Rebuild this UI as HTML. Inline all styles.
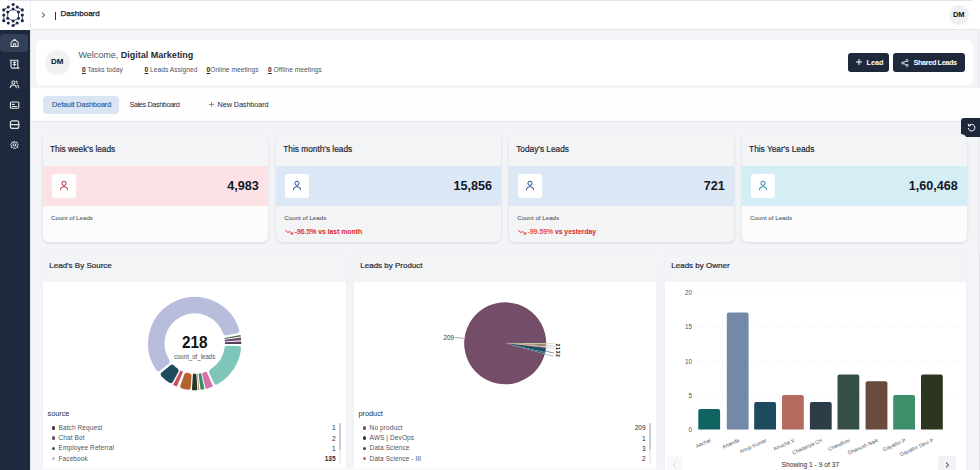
<!DOCTYPE html>
<html><head><meta charset="utf-8">
<style>
*{box-sizing:border-box;margin:0;padding:0}
html,body{width:980px;height:470px;overflow:hidden;font-family:"Liberation Sans",sans-serif;background:#eff1f5;color:#1f2937}
.abs{position:absolute;white-space:nowrap}
#side{position:absolute;left:0;top:30px;width:30px;height:440px;background:#1e293d}
#logo{position:absolute;left:0;top:0;width:30px;height:30px;background:#fff}
#hdr{position:absolute;left:30px;top:0;width:950px;height:30px;background:#fff;border-bottom:1px solid #e3e6eb;border-left:1px solid #eceef1}
#topline{position:absolute;left:8px;top:0;width:964px;height:1px;background:#dfe2e6}
.act{position:absolute;left:0;top:4px;width:28px;height:18px;background:#334058;border-radius:4px}
#mainbg{position:absolute;left:30px;top:30px;width:950px;height:440px;background:#f2f4f7;border-left:1px solid #e6e8ec}
#welcome{position:absolute;left:36px;top:39.5px;width:937px;height:45.8px;background:#fff;border-radius:5px;box-shadow:0 0 1px rgba(0,0,0,.06)}
#tabs{position:absolute;left:31px;top:88px;width:949px;height:34px;background:#fefefe;border-bottom:1px solid #e2e5ea}
.card{position:absolute;top:134px;width:224.7px;height:108.2px;background:#f3f4f6;border-radius:6px;box-shadow:0 1px 3px rgba(0,0,0,.12);overflow:hidden}
.card .t{position:absolute;left:7px;top:10px;font-size:8.3px;color:#1f2937;-webkit-text-stroke:0.2px #1f2937}
.card .band{position:absolute;left:0;top:31.6px;width:100%;height:40.9px}
.card .ib{position:absolute;left:8.7px;top:8.3px;width:24px;height:24px;background:#fff;border-radius:3px}
.card .ib svg{position:absolute;left:0;top:0}
.card .num{position:absolute;right:9px;top:13.2px;font-size:12.6px;font-weight:bold;color:#111827}
.card .c{position:absolute;left:8px;top:80px;font-size:6.2px;color:#374151}
.card .tr{position:absolute;left:8.5px;top:93.5px;font-size:6.8px;color:#dc2626;font-weight:bold}
.card .tr svg{position:absolute;left:0;top:1px}
.card .tr span{position:absolute;left:10px;top:0;white-space:nowrap}
.panel{position:absolute;top:253px;height:217px;background:#f3f4f6;border-radius:6px 6px 0 0;box-shadow:0 0 2px rgba(0,0,0,.06);overflow:hidden}
.panel .t{position:absolute;left:6.3px;top:8.2px;font-size:8px;color:#1f2937;-webkit-text-stroke:0.2px #1f2937}
.panel .body{position:absolute;left:0;top:29px;width:100%;bottom:0;background:#fff}
.btn{position:absolute;top:53px;height:19px;background:#1e293b;border-radius:3px;color:#fff;font-size:7.3px;font-weight:bold}
.leg{position:absolute;font-size:6.5px;color:#4b5563;letter-spacing:0.1px}
.leg i{position:absolute;left:-6.7px;top:2.3px;width:3.4px;height:3.4px;border-radius:50%}
.val{position:absolute;font-size:6.5px;color:#1f2937;text-align:right;width:30px;margin-left:0.6px;margin-top:0.4px}
</style></head><body>
<div id="mainbg"></div>
<div id="logo">
<svg width="30" height="30" viewBox="0 0 30 30" style="position:absolute;left:0;top:0">
<g stroke="#1e2a4a" stroke-width="0.8" fill="none">
<polygon points="13.1,8.9 18.5,12.1 18.5,18.2 13.1,21 7.7,18.2 7.7,12.1"/>
<line x1="3.8" y1="9.9" x2="8.3" y2="7"/><line x1="17.2" y1="7" x2="22.3" y2="9.9"/>
<line x1="3.8" y1="15" x2="3.8" y2="20.7"/><line x1="22.3" y1="15" x2="22.3" y2="20.7"/>
<line x1="13.1" y1="25.5" x2="17.2" y2="23"/>
</g>
<g fill="#1e2a4a">
<circle cx="13.1" cy="4.5" r="1.5"/><circle cx="8.3" cy="7" r="1.5"/><circle cx="17.2" cy="7" r="1.5"/>
<circle cx="3.8" cy="9.9" r="1.6"/><circle cx="22.3" cy="9.9" r="1.6"/><circle cx="13.1" cy="8.9" r="1.5"/>
<circle cx="7.7" cy="12.1" r="1.5"/><circle cx="18.5" cy="12.1" r="1.5"/><circle cx="3.8" cy="15" r="1.6"/>
<circle cx="22.3" cy="15" r="1.6"/><circle cx="3.8" cy="20.7" r="1.6"/><circle cx="22.3" cy="20.7" r="1.6"/>
<circle cx="7.7" cy="18.2" r="1.5"/><circle cx="18.5" cy="18.2" r="1.5"/><circle cx="13.1" cy="21" r="1.5"/>
<circle cx="8.3" cy="23" r="1.5"/><circle cx="17.2" cy="23" r="1.5"/><circle cx="13.1" cy="25.5" r="1.6"/>
</g></svg>
</div>
<div id="hdr">
  <svg class="abs" style="left:9.8px;top:12px" width="5" height="6" viewBox="0 0 5 6"><path d="M1 0.7 L3.8 3 L1 5.3" stroke="#333a45" stroke-width="1" fill="none"/></svg>
  <div class="abs" style="left:24.3px;top:12px;width:1px;height:7.5px;background:#333"></div>
  <div class="abs" style="left:29.6px;top:9.2px;font-size:8px;color:#111827;-webkit-text-stroke:0.25px #111827">Dashboard</div>
  <div class="abs" style="left:918px;top:5.2px;width:19.5px;height:19.5px;border-radius:50%;background:#f0f0f0;font-size:7.5px;font-weight:bold;text-align:center;line-height:19.5px;color:#111">DM</div>
</div>
<div id="topline"></div><div class="abs" style="left:978px;top:30px;width:1px;height:224px;background:#e6e8eb"></div>
<div id="side">
  <div class="act"></div>
  <svg width="30" height="130" viewBox="0 0 30 130" style="position:absolute;left:0;top:0" stroke="#e3e6eb" stroke-width="1.15" fill="none" stroke-linejoin="round" stroke-linecap="round">
    <!-- home center 14.6,13 -->
    <g transform="translate(14.6 13) scale(0.88) translate(-14.6 -13)"><path d="M10.6 12.3 L14.6 8.8 L18.6 12.3 L18.6 17 L10.6 17 Z"/>
    <path d="M13.3 17 L13.3 14 L15.9 14 L15.9 17"/></g>
    <!-- scroll center 14.6,34 -->
    <path d="M11 30.2 L17.8 30.2 L17.8 36.5 Q17.8 38.1 19 38.1 L12.2 38.1 Q11 38.1 11 36.6 L11 31.5 Q11 30.2 10.2 30.2"/>
    <path d="M13.2 32.5 L15.8 32.5 M13.2 34.5 L15.8 34.5 M14.5 31.5 L14.5 36"/>
    <!-- users center 14.4,54.4 -->
    <g transform="translate(14.4 54.4) scale(0.88) translate(-14.4 -54.4)"><circle cx="13.2" cy="52.3" r="1.8"/>
    <path d="M9.8 58.2 Q10 55.2 13.2 55.2 Q16.4 55.2 16.6 58.2"/>
    <path d="M16.3 50.6 Q18 51.2 17.4 53.4 M17.8 55.4 Q19.2 56 19.3 58.2"/></g>
    <!-- card center 14.5,75 -->
    <rect x="10.4" y="72" width="8.4" height="6.2" rx="1"/>
    <path d="M12.3 76.5 L16.8 76.5 M12.3 74.3 L14.2 74.3"/>
    <!-- db center 14.5,94.5 -->
    <rect x="10.4" y="90.8" width="8.4" height="7.6" rx="2"/>
    <path d="M10.3 94.6 L18.9 94.6"/>
    <!-- gear center 14.5,115 -->
    <g transform="translate(14.5 115) scale(0.86) translate(-14.5 -115)"><circle cx="14.5" cy="115" r="1.5"/>
    <path d="M14.5 110.8 L15.6 112 L17.3 111.6 L17.6 113.3 L18.9 114.4 L18 115.9 L18.3 117.6 L16.6 117.9 L15.6 119.2 L14.5 118.5 L13.4 119.2 L12.4 117.9 L10.7 117.6 L11 115.9 L10.1 114.4 L11.4 113.3 L11.7 111.6 L13.4 112 Z"/></g>
  </svg>
</div>
<div id="welcome">
  <div class="abs" style="left:9px;top:10.5px;width:24.5px;height:24.5px;border-radius:50%;background:#f1f1f1;font-size:8px;font-weight:bold;text-align:center;line-height:24.5px;color:#111">DM</div>
  <div class="abs" style="left:42.5px;top:10px;font-size:9px;color:#4b5563">Welcome, <b style="color:#1f2937">Digital Marketing</b></div>
  <div class="abs" style="left:46px;top:26.5px;font-size:6.6px;color:#4b5563;letter-spacing:0.05px"><b style="color:#222;text-decoration:underline">0</b> Tasks today</div>
  <div class="abs" style="left:108.5px;top:26.5px;font-size:6.6px;color:#4b5563;letter-spacing:0.05px"><b style="color:#222;text-decoration:underline">0</b> Leads Assigned</div>
  <div class="abs" style="left:170.5px;top:26.5px;font-size:6.6px;color:#4b5563;letter-spacing:0.05px"><b style="color:#222;text-decoration:underline">0</b>Online meetings</div>
  <div class="abs" style="left:232px;top:26.5px;font-size:6.6px;color:#4b5563;letter-spacing:0.05px"><b style="color:#222;text-decoration:underline">0</b> Offline meetings</div>
</div>
<div class="btn" style="left:848px;width:41px">
  <svg class="abs" style="left:7.5px;top:6px" width="6" height="6" viewBox="0 0 6 6"><path d="M3 0 V6 M0 3 H6" stroke="#fff" stroke-width="1"/></svg>
  <span class="abs" style="left:18.5px;top:4.8px">Lead</span></div>
<div class="btn" style="left:893px;width:72px">
  <svg class="abs" style="left:8px;top:5.5px" width="8" height="8" viewBox="0 0 8 8" fill="none" stroke="#fff" stroke-width="0.8"><circle cx="1.8" cy="4" r="1.1"/><circle cx="6" cy="1.6" r="1.1"/><circle cx="6" cy="6.4" r="1.1"/><path d="M2.8 3.5 L5 2.1 M2.8 4.5 L5 5.9"/></svg>
  <span class="abs" style="left:20.5px;top:4.8px;letter-spacing:-0.38px">Shared Leads</span></div>
<div id="tabs">
  <div class="abs" style="left:12px;top:7.5px;width:76px;height:18.5px;background:#dae5f4;border-radius:4px"></div>
  <div class="abs" style="left:21px;top:12px;font-size:7.3px;color:#34548e;letter-spacing:-0.1px;-webkit-text-stroke:0.12px #34548e">Default Dashboard</div>
  <div class="abs" style="left:98.5px;top:12px;font-size:7.3px;color:#1f2937;letter-spacing:-0.4px">Sales Dashboard</div>
  <svg class="abs" style="left:178px;top:13.5px" width="5" height="5" viewBox="0 0 5 5"><path d="M2.5 0 V5 M0 2.5 H5" stroke="#666" stroke-width="0.7"/></svg>
  <div class="abs" style="left:186.5px;top:12px;font-size:7.3px;color:#1f2937;letter-spacing:-0.1px">New Dashboard</div>
</div>
<div class="abs" style="left:961px;top:118px;width:19px;height:19px;background:#1d2739;border-radius:3px 0 0 3px">
  <svg class="abs" style="left:5.6px;top:4.6px" width="9" height="9" viewBox="0 0 9 9" fill="none" stroke="#fff" stroke-width="1"><path d="M2 2.6 A3.3 3.3 0 1 1 1.3 5"/><path d="M1.2 0.8 L1.6 3 L3.8 2.6" /></svg>
</div>

<div class="card" style="left:43px;background:linear-gradient(#f3f4f6 0,#f3f4f6 72px,#fcfcfd 72px)"><div class="t">This week's leads</div><div class="band" style="background:#fde2e5"><div class="ib"><svg width="24" height="24" viewBox="0 0 24 24" fill="none" stroke="#c2283e" stroke-width="1"><circle cx="12" cy="9.3" r="2.1"/><path d="M8.3 16.2 Q8.3 12.6 12 12.6 Q15.7 12.6 15.7 16.2"/></svg></div><div class="num">4,983</div></div><div class="c">Count of Leads</div></div>
<div class="card" style="left:276.3px"><div class="t">This month's leads</div><div class="band" style="background:#dce8f5"><div class="ib"><svg width="24" height="24" viewBox="0 0 24 24" fill="none" stroke="#2c4f8f" stroke-width="1"><circle cx="12" cy="9.3" r="2.1"/><path d="M8.3 16.2 Q8.3 12.6 12 12.6 Q15.7 12.6 15.7 16.2"/></svg></div><div class="num">15,856</div></div><div class="c">Count of Leads</div><div class="tr"><svg width="9" height="6" viewBox="0 0 9 6" fill="none" stroke="#dc2626" stroke-width="0.9"><path d="M0.3 1.2 L3 3.6 L4.6 2.4 L7.6 5 M5.6 5 L7.8 5 L7.8 3.4"/></svg><span><b style="font-weight:normal;-webkit-text-stroke:0.2px #dc2626">-96.5%</b> vs last month</span></div></div>
<div class="card" style="left:509.2px"><div class="t">Today's Leads</div><div class="band" style="background:#dce8f5"><div class="ib"><svg width="24" height="24" viewBox="0 0 24 24" fill="none" stroke="#2c4f8f" stroke-width="1"><circle cx="12" cy="9.3" r="2.1"/><path d="M8.3 16.2 Q8.3 12.6 12 12.6 Q15.7 12.6 15.7 16.2"/></svg></div><div class="num">721</div></div><div class="c">Count of Leads</div><div class="tr"><svg width="9" height="6" viewBox="0 0 9 6" fill="none" stroke="#dc2626" stroke-width="0.9"><path d="M0.3 1.2 L3 3.6 L4.6 2.4 L7.6 5 M5.6 5 L7.8 5 L7.8 3.4"/></svg><span><b style="font-weight:normal;-webkit-text-stroke:0.1px #dc2626">-99.59%</b> vs yesterday</span></div></div>
<div class="card" style="left:742.1px;background:linear-gradient(#f3f4f6 0,#f3f4f6 72px,#fcfcfd 72px)"><div class="t">This Year's Leads</div><div class="band" style="background:#d5edf4"><div class="ib"><svg width="24" height="24" viewBox="0 0 24 24" fill="none" stroke="#1f8aa6" stroke-width="1"><circle cx="12" cy="9.3" r="2.1"/><path d="M8.3 16.2 Q8.3 12.6 12 12.6 Q15.7 12.6 15.7 16.2"/></svg></div><div class="num">1,60,468</div></div><div class="c">Count of Leads</div></div>

<div class="panel" style="left:43px;width:303px"><div class="t">Lead's By Source</div><div class="body"></div></div>
<div class="panel" style="left:354px;width:302px"><div class="t">Leads by Product</div><div class="body"></div></div><div class="abs" style="left:43px;top:468px;width:613px;height:2px;background:#f8f9fa"></div>
<div class="panel" style="left:665px;width:301px"><div class="t">Leads by Owner</div><div class="body"></div></div>

<div class="abs" style="left:47.5px;top:408.8px;font-size:7.3px;color:#1f2937">source</div>
<div class="leg" style="left:58.5px;top:424px"><i style="background:#4a2f45"></i>Batch Request</div>
<div class="leg" style="left:58.5px;top:434.2px"><i style="background:#6b4a6b"></i>Chat Bot</div>
<div class="leg" style="left:58.5px;top:444.4px"><i style="background:#2f5a3a"></i>Employee Referral</div>
<div class="leg" style="left:58.5px;top:454.6px"><i style="background:#b9bddc"></i>Facebook</div>
<div class="val" style="left:305px;top:424px">1</div>
<div class="val" style="left:305px;top:434.2px">2</div>
<div class="val" style="left:305px;top:444.4px">1</div>
<div class="val" style="left:305px;top:454.6px;font-weight:bold">135</div>
<div class="abs" style="left:339.4px;top:423px;width:1.6px;height:41px;background:#eceef1;border-radius:1px"></div><div class="abs" style="left:339.4px;top:423px;width:1.6px;height:27px;background:#c9cdd3;border-radius:1px"></div>
<div class="abs" style="left:358.5px;top:408.8px;font-size:7.3px;color:#1f2937">product</div>
<div class="leg" style="left:369.6px;top:424px"><i style="background:#744d68"></i>No product</div>
<div class="leg" style="left:369.6px;top:434.2px"><i style="background:#4a2d4a"></i>AWS | DevOps</div>
<div class="leg" style="left:369.6px;top:444.4px"><i style="background:#1f4a5c"></i>Data Science</div>
<div class="leg" style="left:369.6px;top:454.6px"><i style="background:#b86a4f"></i>Data Science - III</div>
<div class="val" style="left:615px;top:424px">209</div>
<div class="val" style="left:615px;top:434.2px">1</div>
<div class="val" style="left:615px;top:444.4px">3</div>
<div class="val" style="left:615px;top:454.6px">2</div>
<div class="abs" style="left:649.4px;top:423px;width:1.6px;height:41px;background:#eceef1;border-radius:1px"></div><div class="abs" style="left:649.4px;top:423px;width:1.6px;height:27px;background:#c9cdd3;border-radius:1px"></div>
<div class="abs" style="left:781.5px;top:460.5px;font-size:6.7px;color:#1f2937">Showing 1 - 9 of 37</div>
<div class="abs" style="left:666px;top:456px;width:17.3px;height:16px;background:#f7f9fb;border-radius:3px"><svg class="abs" style="left:5.8px;top:6.2px" width="5" height="6" viewBox="0 0 5 6"><path d="M3.6 0.6 L1 3 L3.6 5.4" stroke="#c8ccd2" stroke-width="0.8" fill="none"/></svg></div>
<div class="abs" style="left:938px;top:456px;width:17.5px;height:16px;background:#f1f2f5;border-radius:3px"><svg class="abs" style="left:6.8px;top:5.8px" width="5" height="6" viewBox="0 0 5 6"><path d="M1 0.6 L3.6 3 L1 5.4" stroke="#222" stroke-width="1" fill="none"/></svg></div>
<div class="abs" style="left:969.5px;top:254px;width:10.5px;height:216px;background:#f4f5f8;border-right:1px solid #e2e4e8"></div>
<svg id="charts" width="980" height="470" viewBox="0 0 980 470" style="position:absolute;left:0;top:0" font-family="Liberation Sans">
<g id="donut"><path d="M158.54 368.85 A44.10 44.10 0 1 1 236.81 330.51 L225.63 332.98 A32.70 32.70 0 1 0 167.36 361.53 Z" fill="#b9bddc" stroke="#b9bddc" stroke-width="5" stroke-linejoin="round"/>
<path d="M240.49 334.95 A46.60 46.60 0 0 1 240.76 336.55 L224.55 339.03 A30.20 30.20 0 0 0 224.37 337.99 Z" fill="#4f6f50"/>
<path d="M240.91 337.60 A46.60 46.60 0 0 1 241.18 340.27 L224.82 341.44 A30.20 30.20 0 0 0 224.65 339.71 Z" fill="#6e4a6c"/>
<path d="M241.26 341.57 A46.60 46.60 0 0 1 241.30 344.09 L224.90 343.92 A30.20 30.20 0 0 0 224.87 342.28 Z" fill="#5a3b58"/>
<path d="M238.53 348.50 A44.10 44.10 0 0 1 216.26 382.07 L211.51 371.65 A32.70 32.70 0 0 0 227.08 348.18 Z" fill="#7ec5ba" stroke="#7ec5ba" stroke-width="5" stroke-linejoin="round"/>
<path d="M211.76 385.89 A45.60 45.60 0 0 1 206.45 387.66 L203.09 373.65 A31.20 31.20 0 0 0 206.03 372.67 Z" fill="#d673aa" stroke="#d673aa" stroke-width="2" stroke-linejoin="round"/>
<path d="M203.67 388.56 A45.85 45.85 0 0 1 201.18 388.99 L199.34 374.20 A30.95 30.95 0 0 0 200.49 374.00 Z" fill="#3c8d68" stroke="#3c8d68" stroke-width="1.5" stroke-linejoin="round"/>
<path d="M199.33 389.97 A46.60 46.60 0 0 1 198.19 390.07 L196.96 373.71 A30.20 30.20 0 0 0 197.70 373.65 Z" fill="#c98f7a"/>
<path d="M196.52 389.41 A45.85 45.85 0 0 1 192.72 389.41 L193.63 374.53 A30.95 30.95 0 0 0 195.66 374.54 Z" fill="#243923" stroke="#243923" stroke-width="1.5" stroke-linejoin="round"/>
<path d="M188.48 387.51 A44.35 44.35 0 0 1 182.45 386.22 L186.56 375.01 A32.45 32.45 0 0 0 189.31 375.60 Z" fill="#b3642e" stroke="#b3642e" stroke-width="4.5" stroke-linejoin="round"/>
<path d="M176.40 385.64 A45.85 45.85 0 0 1 173.97 384.50 L180.95 371.33 A30.95 30.95 0 0 0 182.10 371.87 Z" fill="#c9525f" stroke="#c9525f" stroke-width="1.5" stroke-linejoin="round"/>
<path d="M170.76 380.64 A44.10 44.10 0 0 1 163.12 374.39 L171.96 367.10 A32.70 32.70 0 0 0 176.16 370.54 Z" fill="#1c4b60" stroke="#1c4b60" stroke-width="5" stroke-linejoin="round"/>
</g><!--donutend-->
<text x="0" y="0" transform="translate(194.7 348.4) scale(0.93 1)" text-anchor="middle" font-size="16.5" font-weight="bold" fill="#111">218</text>
<text x="0" y="0" transform="translate(194.6 358.6) scale(0.97 1)" text-anchor="middle" font-size="6.3" fill="#4b5563">count_of_leads</text>
<g><path d="M505.2 343.3 L544.80 353.91 A41 41 0 1 1 546.20 343.30 Z" fill="#744d68"/><path d="M505.2 343.3 L546.20 343.30 A41 41 0 0 1 546.18 344.44 Z" fill="#b7cc8e"/><path d="M505.2 343.3 L546.18 344.44 A41 41 0 0 1 546.16 345.16 Z" fill="#3f5a3c"/><path d="M505.2 343.3 L546.16 345.16 A41 41 0 0 1 546.07 346.59 Z" fill="#c2825e"/><path d="M505.2 343.3 L546.07 346.59 A41 41 0 0 1 545.96 347.73 Z" fill="#d9a0a8"/><path d="M505.2 343.3 L545.96 347.73 A41 41 0 0 1 545.23 352.17 Z" fill="#1f4f62"/><path d="M505.2 343.3 L545.23 352.17 A41 41 0 0 1 544.80 353.91 Z" fill="#3b6f86"/><path d="M546 343.9 L552.5 343.2 L554.5 343.4" stroke="#b7cc8e" stroke-width="0.6" fill="none"/><path d="M546 345.6 L552.5 345.9 L554.5 346.4" stroke="#9aa0a8" stroke-width="0.5" fill="none"/><path d="M546 347.3 L552.5 348.3 L554.5 349.2" stroke="#d9a0a8" stroke-width="0.5" fill="none"/><path d="M545.5 351 L551.5 352.5 L554 353" stroke="#1f4f62" stroke-width="0.6" fill="none"/><path d="M545 354 L550 355.5 L553.5 356" stroke="#7a6a8a" stroke-width="0.5" fill="none"/><text x="0" y="0" transform="translate(556.2 350) rotate(90)" text-anchor="middle" font-size="5.2" font-weight="bold" fill="#111" letter-spacing="-0.4">2 1 3 2</text><path d="M455 337.6 L463.8 338.2" stroke="#666" stroke-width="0.6"/><text x="454" y="339.8" text-anchor="end" font-size="6.3" fill="#333">209</text></g>
<g><line x1="696" y1="292" x2="962" y2="292" stroke="#e1e4e8" stroke-width="0.6" stroke-dasharray="1 2.2"/><text x="692" y="294.6" text-anchor="end" font-size="6.3" fill="#4b5563">20</text><line x1="696" y1="326.7" x2="962" y2="326.7" stroke="#e1e4e8" stroke-width="0.6" stroke-dasharray="1 2.2"/><text x="692" y="329.3" text-anchor="end" font-size="6.3" fill="#4b5563">15</text><line x1="696" y1="361.1" x2="962" y2="361.1" stroke="#e1e4e8" stroke-width="0.6" stroke-dasharray="1 2.2"/><text x="692" y="363.7" text-anchor="end" font-size="6.3" fill="#4b5563">10</text><line x1="696" y1="395.3" x2="962" y2="395.3" stroke="#e1e4e8" stroke-width="0.6" stroke-dasharray="1 2.2"/><text x="692" y="397.9" text-anchor="end" font-size="6.3" fill="#4b5563">5</text><text x="692" y="432.1" text-anchor="end" font-size="6.3" fill="#4b5563">0</text></g>
<g><path d="M698.3 429.5 V410.9 Q698.3 408.9 700.3 408.9 H718.1 Q720.1 408.9 720.1 410.9 V429.5 Z" fill="#0f6461"/>
<path d="M726.8 429.5 V314.5 Q726.8 312.5 728.8 312.5 H746.6 Q748.6 312.5 748.6 314.5 V429.5 Z" fill="#7489a8"/>
<path d="M754.2 429.5 V404.0 Q754.2 402.0 756.2 402.0 H774.0 Q776.0 402.0 776.0 404.0 V429.5 Z" fill="#1d4a5e"/>
<path d="M782.0 429.5 V397.1 Q782.0 395.1 784.0 395.1 H801.8 Q803.8 395.1 803.8 397.1 V429.5 Z" fill="#b56a5f"/>
<path d="M809.9 429.5 V404.0 Q809.9 402.0 811.9 402.0 H829.7 Q831.7 402.0 831.7 404.0 V429.5 Z" fill="#2d3d48"/>
<path d="M837.5 429.5 V376.5 Q837.5 374.5 839.5 374.5 H857.3 Q859.3 374.5 859.3 376.5 V429.5 Z" fill="#364f44"/>
<path d="M865.6 429.5 V383.3 Q865.6 381.3 867.6 381.3 H885.4 Q887.4 381.3 887.4 383.3 V429.5 Z" fill="#6a4a3c"/>
<path d="M893.2 429.5 V397.1 Q893.2 395.1 895.2 395.1 H913.0 Q915.0 395.1 915.0 397.1 V429.5 Z" fill="#3d8f6c"/>
<path d="M921.0 429.5 V376.5 Q921.0 374.5 923.0 374.5 H940.8 Q942.8 374.5 942.8 376.5 V429.5 Z" fill="#2c3520"/>
<text x="711.2" y="441.5" transform="rotate(-24 711.2 441.5)" text-anchor="end" font-size="5.2" fill="#4b5563">Aachal</text>
<text x="739.7" y="441.5" transform="rotate(-24 739.7 441.5)" text-anchor="end" font-size="5.2" fill="#4b5563">Ananda</text>
<text x="767.1" y="441.5" transform="rotate(-24 767.1 441.5)" text-anchor="end" font-size="5.2" fill="#4b5563">Anup Kumar</text>
<text x="794.9" y="441.5" transform="rotate(-24 794.9 441.5)" text-anchor="end" font-size="5.2" fill="#4b5563">Anusha V</text>
<text x="822.8" y="441.5" transform="rotate(-24 822.8 441.5)" text-anchor="end" font-size="5.2" fill="#4b5563">Chaitanya CH</text>
<text x="850.4" y="441.5" transform="rotate(-24 850.4 441.5)" text-anchor="end" font-size="5.2" fill="#4b5563">Chandhini</text>
<text x="878.5" y="441.5" transform="rotate(-24 878.5 441.5)" text-anchor="end" font-size="5.2" fill="#4b5563">Dhanush Naik</text>
<text x="906.1" y="441.5" transform="rotate(-24 906.1 441.5)" text-anchor="end" font-size="5.2" fill="#4b5563">Gayathri P</text>
<text x="933.9" y="441.5" transform="rotate(-24 933.9 441.5)" text-anchor="end" font-size="5.2" fill="#4b5563">Gayathri Devi P</text>
</g>
</svg>
</body></html>
